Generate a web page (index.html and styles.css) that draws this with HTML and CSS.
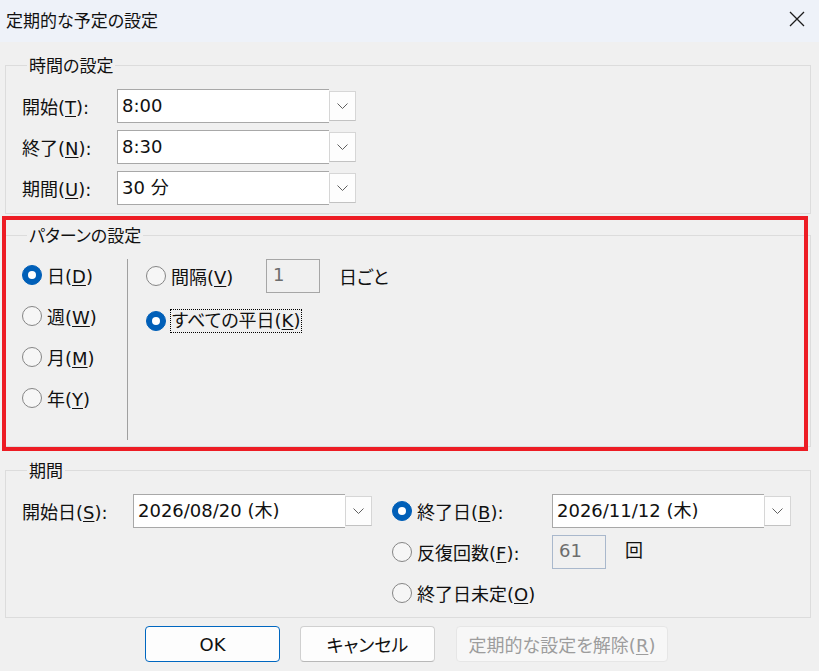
FILE: index.html
```html
<!DOCTYPE html>
<html lang="ja">
<head>
  <meta charset="UTF-8" />
  <title>定期的な予定の設定</title>
  <link rel="stylesheet" href="styles.css">
</head>
<body>
  <div class="dialog">
    <div class="titlebar">
      <span class="title">定期的な予定の設定</span>
      <span class="close">
        <svg width="16" height="16" viewBox="0 0 16 16"><path d="M1 1 L15 15 M15 1 L1 15" stroke="#1c1c1c" stroke-width="1.3" fill="none"/></svg>
      </span>
    </div>

    <div class="content">
      <!-- 時間 -->
      <fieldset class="group group-time">
        <legend>時間の設定</legend>
        <div class="rows">
          <div class="field-row">
            <span class="label label-time">開始(<u>T</u>):</span>
            <div class="combo">
              <div class="combo-text">8:00</div>
              <div class="combo-btn"><svg width="11" height="6" viewBox="0 0 11 6"><polyline points="0.5,0.5 5.5,5.5 10.5,0.5" stroke="#5f5f5f" fill="none"/></svg></div>
            </div>
          </div>
          <div class="field-row">
            <span class="label label-time">終了(<u>N</u>):</span>
            <div class="combo">
              <div class="combo-text">8:30</div>
              <div class="combo-btn"><svg width="11" height="6" viewBox="0 0 11 6"><polyline points="0.5,0.5 5.5,5.5 10.5,0.5" stroke="#5f5f5f" fill="none"/></svg></div>
            </div>
          </div>
          <div class="field-row">
            <span class="label label-time">期間(<u>U</u>):</span>
            <div class="combo">
              <div class="combo-text">30 分</div>
              <div class="combo-btn"><svg width="11" height="6" viewBox="0 0 11 6"><polyline points="0.5,0.5 5.5,5.5 10.5,0.5" stroke="#5f5f5f" fill="none"/></svg></div>
            </div>
          </div>
        </div>
      </fieldset>

      <!-- パターン -->
      <fieldset class="group group-pattern">
        <legend>パターンの設定</legend>
        <div class="pattern">
          <div class="freq-list">
            <div class="option"><span class="radio checked"></span><span>日(<u>D</u>)</span></div>
            <div class="option"><span class="radio"></span><span>週(<u>W</u>)</span></div>
            <div class="option"><span class="radio"></span><span>月(<u>M</u>)</span></div>
            <div class="option"><span class="radio"></span><span>年(<u>Y</u>)</span></div>
          </div>
          <div class="separator"></div>
          <div class="daily">
            <div class="daily-row">
              <div class="option option-interval"><span class="radio"></span><span>間隔(<u>V</u>)</span></div>
              <div class="textbox">1</div>
              <span class="suffix">日ごと</span>
            </div>
            <div class="daily-row daily-weekday">
              <div class="option"><span class="radio checked"></span><span class="focus">すべての平日(<u>K</u>)</span></div>
            </div>
          </div>
        </div>
      </fieldset>

      <!-- 期間 -->
      <fieldset class="group group-range">
        <legend>期間</legend>
        <div class="range">
          <div class="field-row">
            <span class="label label-range">開始日(<u>S</u>):</span>
            <div class="combo">
              <div class="combo-text">2026/08/20 (木)</div>
              <div class="combo-btn"><svg width="11" height="6" viewBox="0 0 11 6"><polyline points="0.5,0.5 5.5,5.5 10.5,0.5" stroke="#5f5f5f" fill="none"/></svg></div>
            </div>
          </div>
          <div class="range-end">
            <div class="field-row">
              <div class="option option-end"><span class="radio checked"></span><span>終了日(<u>B</u>):</span></div>
              <div class="combo">
                <div class="combo-text">2026/11/12 (木)</div>
                <div class="combo-btn"><svg width="11" height="6" viewBox="0 0 11 6"><polyline points="0.5,0.5 5.5,5.5 10.5,0.5" stroke="#5f5f5f" fill="none"/></svg></div>
              </div>
            </div>
            <div class="field-row">
              <div class="option option-end"><span class="radio"></span><span>反復回数(<u>F</u>):</span></div>
              <div class="textbox textbox-count">61</div>
              <span class="suffix suffix-count">回</span>
            </div>
            <div class="field-row">
              <div class="option option-end"><span class="radio"></span><span>終了日未定(<u>O</u>)</span></div>
            </div>
          </div>
        </div>
      </fieldset>

      <div class="buttons">
        <button class="btn btn-default">OK</button>
        <button class="btn">キャンセル</button>
        <button class="btn btn-disabled">定期的な設定を解除(<u>R</u>)</button>
      </div>
    </div>

    <div class="highlight"></div>
  </div>
</body>
</html>
```

FILE: styles.css
```css
body {
  margin: 0;
  background: #f0f0f0;
  font-family: "DejaVu Sans", "Noto Sans CJK JP", sans-serif;
  font-size: 18px;
  font-feature-settings: "palt";
  color: #111;
}

.dialog {
  position: relative;
  width: 819px;
  height: 671px;
  overflow: hidden;
}

.titlebar {
  height: 42px;
  background: #eef2f9;
  display: flex;
  align-items: center;
  justify-content: space-between;
  padding: 0 14px 4px 6px;
  box-sizing: border-box;
}

.title {
  font-family: "Noto Sans CJK JP", sans-serif;
  font-size: 17px;
}

.close {
  display: flex;
}

.content {
  padding-left: 5px;
}

u {
  text-decoration-thickness: 1px;
  text-underline-offset: 2px;
}

/* group boxes */
.group {
  width: 806px;
  box-sizing: border-box;
  margin: 0;
  min-width: 0;
  border: 1px solid #dcdcdc;
}

.group legend {
  margin-left: 5px;
  padding: 0 2px;
  line-height: 20px;
  font-family: "Noto Sans CJK JP", sans-serif;
  font-size: 17px;
}

.group-time {
  margin-top: 13px;
  padding: 14px 0 8px 16px;
}

.group-pattern {
  margin-top: 11px;
  padding: 14px 0 6px 16px;
}

.group-range {
  margin-top: 13px;
  padding: 14px 0 7px 16px;
}

.rows {
  display: flex;
  flex-direction: column;
  gap: 7px;
}

.field-row {
  display: flex;
  align-items: center;
  height: 34px;
}

.label {
  flex: none;
}

.label-time {
  width: 95px;
}

.label-range {
  width: 111px;
}

/* combo boxes */
.combo {
  display: flex;
  align-items: center;
}

.combo-text {
  width: 212px;
  height: 34px;
  box-sizing: border-box;
  background: #fff;
  border: 1px solid #a8a8a8;
  border-right: none;
  padding-left: 4px;
  line-height: 31px;
}

.combo-btn {
  width: 27px;
  height: 30px;
  box-sizing: border-box;
  background: #fdfdfd;
  border: 1px solid #d6d6d6;
  border-bottom-color: #c2c2c2;
  display: flex;
  align-items: center;
  justify-content: center;
}

/* radio buttons */
.option {
  display: flex;
  align-items: center;
  gap: 5px;
  flex: none;
}

.radio {
  width: 20px;
  height: 20px;
  box-sizing: border-box;
  border-radius: 50%;
  border: 1px solid #858585;
  background: #f6f6f6;
  position: relative;
  flex: none;
}

.radio.checked {
  background: #005fb8;
  border-color: #005fb8;
}

.radio.checked::after {
  content: "";
  position: absolute;
  left: 5px;
  top: 5px;
  width: 8px;
  height: 8px;
  border-radius: 50%;
  background: #fff;
}

/* pattern */
.pattern {
  display: flex;
}

.freq-list {
  width: 105px;
  display: flex;
  flex-direction: column;
  gap: 9px;
}

.freq-list .option {
  height: 32px;
}

.separator {
  width: 1px;
  height: 181px;
  background: #a0a0a0;
}

.daily {
  margin-left: 18px;
}

.daily-row {
  display: flex;
  align-items: center;
  height: 34px;
}

.option-interval {
  width: 120px;
}

.daily-weekday {
  margin-top: 13px;
  height: 30px;
}

.focus {
  border: 1px dotted #000;
  padding: 0 1px;
  line-height: 22px;
  margin-left: -1px;
}

.textbox {
  width: 54px;
  height: 34px;
  box-sizing: border-box;
  border: 1px solid #a6a6a6;
  color: #6d6d6d;
  padding-left: 6px;
  line-height: 30px;
}

.suffix {
  margin-left: 19px;
  font-family: "Noto Sans CJK JP", sans-serif;
}

/* range */
.range {
  display: flex;
  align-items: flex-start;
}

.range-end {
  margin-left: 20px;
  display: flex;
  flex-direction: column;
  gap: 7px;
}

.option-end {
  width: 160px;
}

.textbox-count {
  border-color: #a9b8cc;
}

.suffix-count {
  margin-top: -6px;
}

/* buttons */
.buttons {
  display: flex;
  gap: 20px;
  padding-left: 140px;
  margin-top: 8px;
}

.btn {
  height: 36px;
  width: 135px;
  border: 1px solid #d0d0d0;
  border-bottom-color: #b8b8b8;
  border-radius: 4px;
  background: #fdfdfd;
  font: inherit;
  color: #111;
  padding: 0;
}

.btn-default {
  border: 1px solid #0067c0;
}

.btn-disabled {
  width: 212px;
  margin-left: 1px;
  background: #f7f7f7;
  border-color: #e6e6e6;
  color: #9d9d9d;
}

/* red frame drawn over the pattern group */
.highlight {
  position: absolute;
  left: 2px;
  top: 216px;
  width: 806px;
  height: 235px;
  box-sizing: border-box;
  border: 4px solid #ed1c24;
  pointer-events: none;
}
```
